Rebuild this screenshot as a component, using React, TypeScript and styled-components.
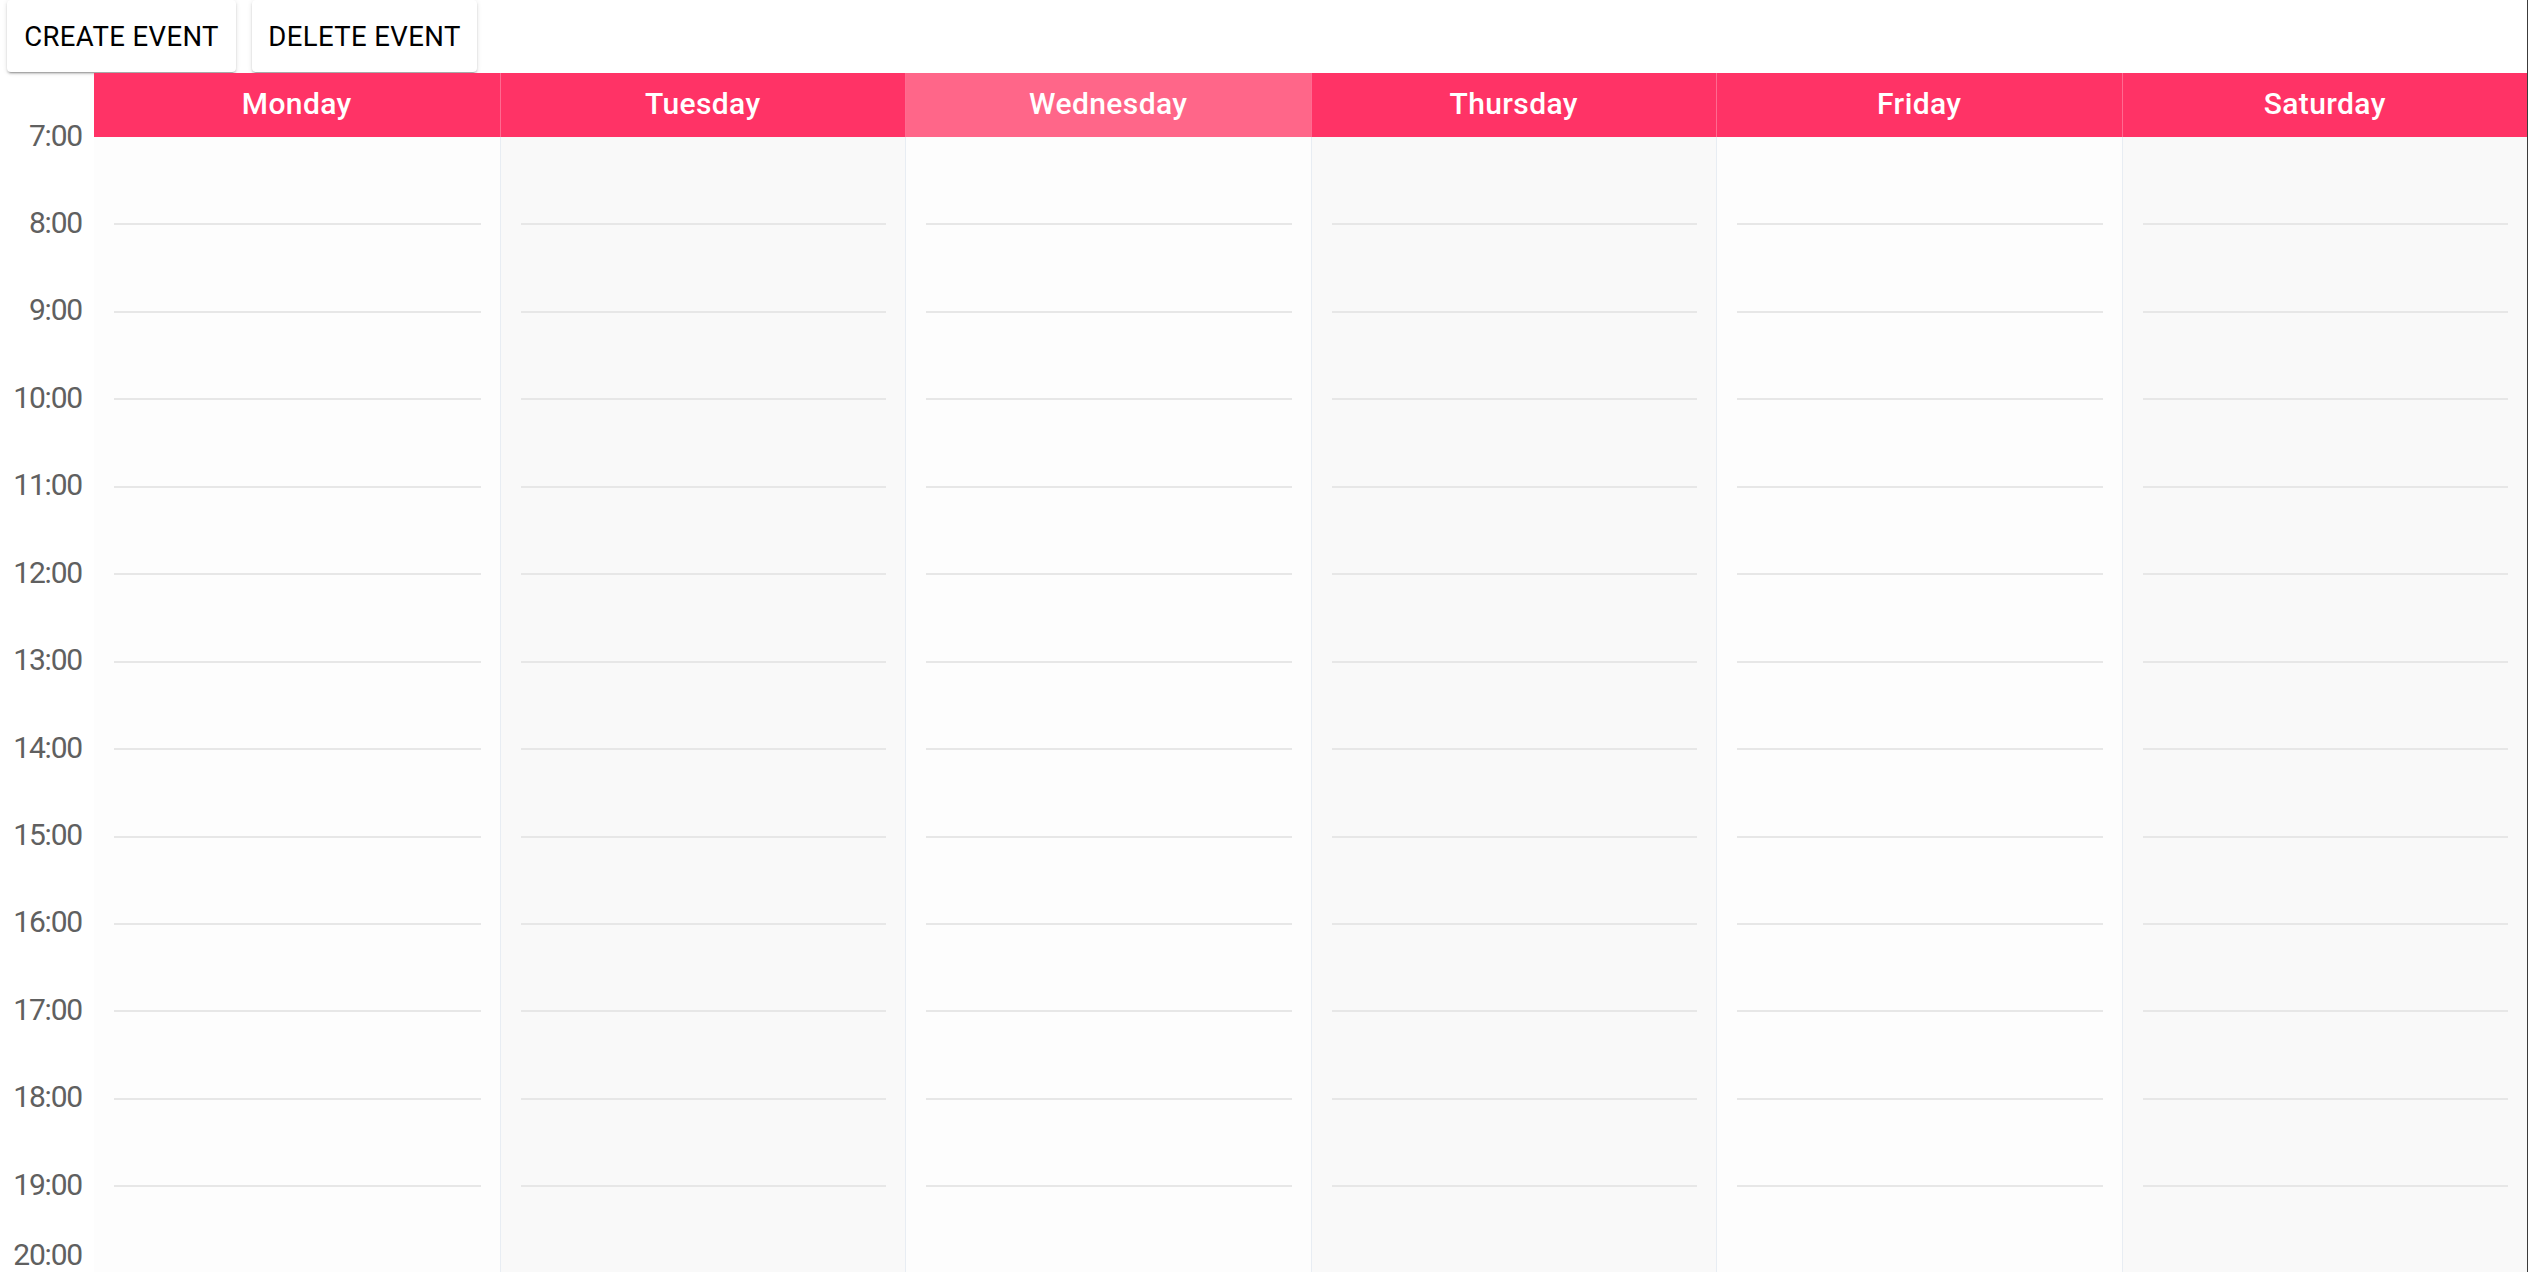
import React from "react";
import styled, { createGlobalStyle } from "styled-components";

const HOUR = 87.45;

const GlobalStyle = createGlobalStyle`
  html, body {
    margin: 0;
    padding: 0;
    height: 100%;
    overflow: hidden;
    background: #ffffff;
  }
  body {
    font-family: Roboto, "Noto Sans", sans-serif;
  }
  #root {
    height: 100%;
  }
`;

const Page = styled.div`
  width: 2527px;
  height: 1272px;
  border-right: 1px solid #3c3c3c;
  display: flex;
  flex-direction: column;
  overflow: hidden;
  background: #ffffff;
`;

const Toolbar = styled.div`
  height: 73px;
  display: flex;
  align-items: flex-start;
  gap: 16px;
  padding-left: 7px;
  flex-shrink: 0;
`;

const ActionButton = styled.button<{ $width: number }>`
  width: ${(p) => p.$width}px;
  height: 72px;
  border: none;
  border-radius: 4px;
  background: #ffffff;
  box-shadow: 0 3px 1px -2px rgba(0, 0, 0, 0.2), 0 2px 2px 0 rgba(0, 0, 0, 0.14),
    0 1px 5px 0 rgba(0, 0, 0, 0.12);
  font-family: Roboto, "Noto Sans", sans-serif;
  font-size: 27.5px;
  font-weight: 400;
  letter-spacing: 0.4px;
  color: #000000;
  padding: 0;
  display: flex;
  align-items: center;
  justify-content: center;
  cursor: pointer;
`;

const Body = styled.div`
  flex: 1;
  display: flex;
  min-height: 0;
`;

const TimeColumn = styled.div`
  width: 94px;
  flex-shrink: 0;
  display: flex;
  flex-direction: column;
  padding-top: 18.3px;
  box-sizing: border-box;
`;

const TimeLabel = styled.div<{ $h: number }>`
  height: ${(p) => p.$h}px;
  flex-shrink: 0;
  display: flex;
  align-items: center;
  justify-content: flex-end;
  padding-right: 12px;
  font-family: Roboto, "Noto Sans", sans-serif;
  font-size: 30px;
  letter-spacing: -1.2px;
  color: #606060;
`;

const DaysGrid = styled.div`
  flex: 1;
  display: grid;
  grid-template-columns: repeat(6, 1fr);
`;

const DayColumn = styled.div<{ $alt: boolean; $first: boolean }>`
  display: flex;
  flex-direction: column;
  background: ${(p) => (p.$alt ? "#f9f9f9" : "#fdfdfd")};
  border-left: ${(p) => (p.$first ? "none" : "1px solid #e8edf3")};
  min-width: 0;
`;

const DayHeader = styled.div<{ $today: boolean; $first: boolean }>`
  height: 64px;
  flex-shrink: 0;
  display: flex;
  align-items: center;
  justify-content: center;
  padding-bottom: 4px;
  box-sizing: border-box;
  background: ${(p) => (p.$today ? "#ff6689" : "#ff3366")};
  box-shadow: ${(p) => (p.$first ? "none" : "-1px 0 0 #ff6a90")};
  color: #ffffff;
  font-family: Roboto, "Noto Sans", sans-serif;
  font-size: 30px;
  font-weight: 500;
  letter-spacing: 0.4px;
`;

const HourSlot = styled.div<{ $line: boolean }>`
  height: ${HOUR}px;
  flex-shrink: 0;
  display: flex;
  align-items: flex-end;
  padding: 0 19px 0 20px;
  &::after {
    content: "";
    display: ${(p) => (p.$line ? "block" : "none")};
    width: 100%;
    height: 2px;
    margin-bottom: -1px;
    background: #e7e7e7;
  }
`;

const days = ["Monday", "Tuesday", "Wednesday", "Thursday", "Friday", "Saturday"];
const hours = Array.from({ length: 14 }, (_, i) => `${i + 7}:00`);

export default function App() {
  return (
    <>
      <GlobalStyle />
      <Page>
        <Toolbar>
          <ActionButton $width={229}>CREATE EVENT</ActionButton>
          <ActionButton $width={225}>DELETE EVENT</ActionButton>
        </Toolbar>
        <Body>
          <TimeColumn>
            {hours.map((h, i) => (
              <TimeLabel key={h} $h={i === hours.length - 1 ? 54 : HOUR}>
                {h}
              </TimeLabel>
            ))}
          </TimeColumn>
          <DaysGrid>
            {days.map((d, di) => (
              <DayColumn key={d} $alt={di % 2 === 1} $first={di === 0}>
                <DayHeader $today={d === "Wednesday"} $first={di === 0}>
                  {d}
                </DayHeader>
                {hours.slice(0, 13).map((h, hi) => (
                  <HourSlot key={h} $line={hi < 12} />
                ))}
              </DayColumn>
            ))}
          </DaysGrid>
        </Body>
      </Page>
    </>
  );
}
